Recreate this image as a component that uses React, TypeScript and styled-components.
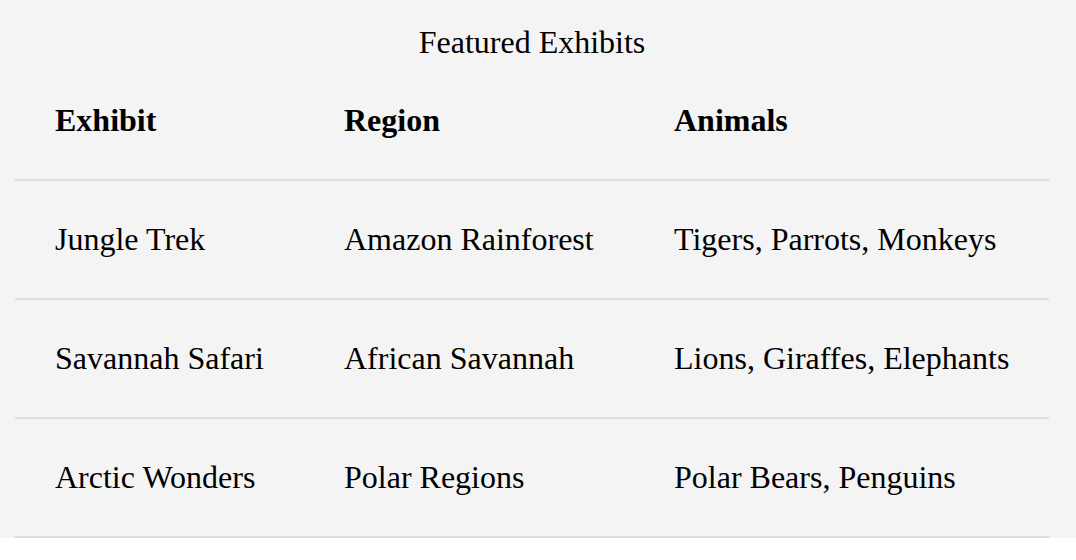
import React from "react";
import styled, { createGlobalStyle } from "styled-components";

const GlobalStyle = createGlobalStyle`
  body {
    margin: 0;
    background: #ffffff;
    font-family: "Liberation Serif", "Times New Roman", serif;
    color: #000000;
  }
`;

interface Exhibit {
  name: string;
  region: string;
  animals: string;
}

const EXHIBITS: Exhibit[] = [
  { name: "Jungle Trek", region: "Amazon Rainforest", animals: "Tigers, Parrots, Monkeys" },
  { name: "Savannah Safari", region: "African Savannah", animals: "Lions, Giraffes, Elephants" },
  { name: "Arctic Wonders", region: "Polar Regions", animals: "Polar Bears, Penguins" },
];

export default function App() {
  return (
    <>
      <GlobalStyle />
      <Section>
        <Table>
          <Caption>Featured Exhibits</Caption>
          <colgroup>
            <col style={{ width: 289 }} />
            <col style={{ width: 330 }} />
            <col style={{ width: 415 }} />
          </colgroup>
          <thead>
            <tr>
              <HeadCell>Exhibit</HeadCell>
              <HeadCell>Region</HeadCell>
              <HeadCell>Animals</HeadCell>
            </tr>
          </thead>
          <tbody>
            {EXHIBITS.map((exhibit) => (
              <tr key={exhibit.name}>
                <Cell>{exhibit.name}</Cell>
                <Cell>{exhibit.region}</Cell>
                <Cell>{exhibit.animals}</Cell>
              </tr>
            ))}
          </tbody>
        </Table>
      </Section>
    </>
  );
}

const Section = styled.section`
  background: #f4f4f4;
  padding: 24px 27px 0 15px;
`;
const Table = styled.table`
  width: 1034px;
  border-collapse: collapse;
  table-layout: fixed;
  font-size: 32px;
`;
const Caption = styled.caption`
  font-size: 32px;
  line-height: 37px;
  padding-bottom: 1px;
  text-align: center;
`;
const HeadCell = styled.th`
  text-align: left;
  font-weight: bold;
  padding: 40px;
  line-height: 37px;
  white-space: nowrap;
  border-bottom: 2px solid #dddddd;
`;
const Cell = styled.td`
  padding: 40px;
  line-height: 37px;
  white-space: nowrap;
  border-bottom: 2px solid #dddddd;
`;
